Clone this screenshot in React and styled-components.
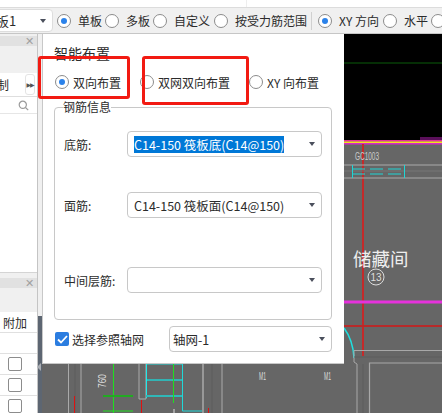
import React from 'react';
import styled, { createGlobalStyle } from 'styled-components';

const GlobalStyle = createGlobalStyle`
  html, body {
    margin: 0;
    padding: 0;
    overflow: hidden;
    background: #fff;
  }

  * {
    box-sizing: border-box;
  }
`;

const Page = styled.div`
  width: 442px;
  height: 413px;
  overflow: hidden;
  display: flex;
  flex-direction: column;
  font-family: 'Noto Sans CJK SC', 'Open Sans', sans-serif;
  font-size: 12px;
  color: #2b2b2b;
`;

const TopStrip = styled.div`
  height: 8px;
  flex: none;
  background: #fff;
  border-bottom: 1px solid #dcdcdc;
  padding-left: 246px;
`;

const StripDivider = styled.div`
  width: 1px;
  height: 7px;
  background: #eee;
`;

const Toolbar = styled.div`
  height: 26px;
  flex: none;
  display: flex;
  align-items: center;
  background: #f0f0f0;
  border-bottom: 1px solid #c6c6c6;
  white-space: nowrap;
`;

const BoardCombo = styled.div`
  flex: none;
  width: 63px;
  height: 23px;
  margin-left: -10px;
  margin-right: 4px;
  padding: 0 0 0 5px;
  display: flex;
  align-items: center;
  justify-content: space-between;
  background: #fff;
  border: 1px solid #ddd;
  border-radius: 4px;
  font-size: 13px;
`;

const Caret = styled.span`
  flex: none;
  width: 0;
  height: 0;
  margin-right: ${(p) => p.$right || 6}px;
  border-left: 3px solid transparent;
  border-right: 3px solid transparent;
  border-top: 4px solid #4a4f5c;
`;

const Radio = styled.span`
  flex: none;
  position: relative;
  display: block;
  width: 14px;
  height: 14px;
  border: 1px solid #8c8c8c;
  border-radius: 50%;
  background: #fff;

  &::after {
    content: '';
    display: ${(p) => (p.$checked ? 'block' : 'none')};
    position: absolute;
    left: 3px;
    top: 3px;
    width: 6px;
    height: 6px;
    border-radius: 50%;
    background: #2b82ea;
  }
`;

const ToolOption = styled.label`
  flex: none;
  display: flex;
  align-items: center;
  gap: 7px;
  margin-right: ${(p) => p.$gap ?? 3}px;
  font-size: 12px;
  line-height: 16px;
`;

const ToolDivider = styled.span`
  flex: none;
  width: 1px;
  height: 18px;
  margin: 0 6px 0 1px;
  background: #d0d0d0;
`;

const Main = styled.div`
  flex: 1;
  min-height: 0;
  display: flex;
`;

const Sidebar = styled.div`
  flex: none;
  width: 42px;
  display: flex;
`;

const Panels = styled.div`
  width: 38px;
  display: flex;
  flex-direction: column;
  background: #f0f0f0;
  border-right: 1px solid #c4c4c4;
`;

const Splitter = styled.div`
  width: 4px;
  display: flex;
  flex-direction: column;
  justify-content: flex-end;
  background: #f0f0f0;
`;

const SplitterBar = styled.div`
  height: 97px;
  padding-top: 47px;
  background: #5d6672;
`;

const SplitterArrow = styled.div`
  width: 0;
  height: 0;
  margin-left: -1px;
  border-top: 4px solid transparent;
  border-bottom: 4px solid transparent;
  border-right: 4px solid #a9adb3;
`;

const PanelTitle = styled.div`
  height: 10px;
  margin-top: ${(p) => p.$top}px;
  flex: none;
  display: flex;
  align-items: center;
  justify-content: flex-end;
  padding-right: 3px;
  background: #e1e1e1;
  color: #a0a0a0;
  font-family: 'Liberation Sans', sans-serif;
  font-size: 11px;
  line-height: 10px;
`;

const PanelGap = styled.div`
  height: ${(p) => p.$height}px;
  flex: none;
`;

const TabRow = styled.div`
  height: 24px;
  flex: none;
  display: flex;
  align-items: center;
  justify-content: space-between;
  padding: 0 2px 0 0;
  background: #fff;
  border-bottom: 1px solid #dedede;
  overflow: hidden;
`;

const TabText = styled.span`
  flex: none;
  margin-left: -3px;
  font-size: 12px;
`;

const MoreButton = styled.span`
  flex: none;
  width: 10px;
  height: 21px;
  display: flex;
  align-items: center;
  justify-content: center;
  border: 1px solid #e4e4e4;
  border-radius: 3px;
  color: #555;
  font-family: 'DejaVu Sans', sans-serif;
  font-size: 6px;
  letter-spacing: -1px;
`;

const SearchRow = styled.div`
  height: 17px;
  flex: none;
  display: flex;
  align-items: center;
  justify-content: flex-end;
  padding-right: 8px;
  background: #fff;
  border-bottom: 1px solid #e6e6e6;
`;

const ListBody = styled.div`
  height: 159px;
  flex: none;
  background: #fff;
  border-bottom: 1px solid #d4d4d4;
`;

const TableHead = styled.div`
  height: 21px;
  flex: none;
  display: flex;
  align-items: center;
  padding-left: 3px;
  background: #fff;
  border-bottom: 1px solid #e0e0e0;
  font-size: 12px;
  white-space: nowrap;
  overflow: hidden;
`;

const TableRow = styled.div`
  height: 21px;
  flex: none;
  display: flex;
  align-items: center;
  padding-left: 8px;
  background: #fff;
  border-bottom: 1px solid #e0e0e0;
`;

const CellCheck = styled.span`
  width: 14px;
  height: 14px;
  border: 1px solid #8c8c8c;
  border-radius: 2px;
  background: #fff;
`;

const Canvas = styled.div`
  flex: 1;
  position: relative;
  background: #666;
`;

const Drawing = styled.svg`
  display: block;
`;

const Dialog = styled.div`
  position: absolute;
  left: 0;
  top: 0;
  width: 302px;
  height: 330px;
  padding: 10px 12px 0 11px;
  display: flex;
  flex-direction: column;
  background: #fff;
  border-left: 1px solid #c8c8c8;
  border-bottom: 1px solid #c8c8c8;
`;

const DialogTitle = styled.div`
  height: 19px;
  font-size: 14px;
  line-height: 19px;
`;

const ModeRow = styled.div`
  height: 37px;
  padding: 10px 0 0 1px;
  display: flex;
  align-items: flex-start;
`;

const ModeOption = styled.label`
  flex: none;
  width: ${(p) => p.$width}px;
  height: 18px;
  display: flex;
  align-items: center;
  gap: 4px;
  font-size: 12px;
  white-space: nowrap;
`;

const RebarGroup = styled.fieldset`
  margin: 0;
  height: 220px;
  padding: 0 9px 0 9px;
  border: 1px solid #c8c8c8;
  border-radius: 4px;
  min-width: 0;
`;

const GroupLegend = styled.legend`
  padding: 0;
  margin-left: -1px;
  font-size: 12px;
  line-height: 14px;
`;

const FieldRow = styled.div`
  display: flex;
  align-items: center;
  margin-top: ${(p) => p.$top}px;
  height: 26px;
`;

const FieldLabel = styled.span`
  flex: none;
  width: 63px;
  font-size: 12px;
  white-space: nowrap;
`;

const Select = styled.div`
  flex: 1;
  height: 26px;
  display: flex;
  align-items: center;
  justify-content: space-between;
  padding-left: ${(p) => p.$pad || 6}px;
  background: #fff;
  border: 1px solid #c8c8c8;
  border-radius: 4px;
  font-size: 12.5px;
  white-space: nowrap;
`;

const SelectedText = styled.span`
  height: 17px;
  line-height: 17px;
  background: #0078d7;
  color: #fff;
`;

const Footer = styled.div`
  display: flex;
  align-items: center;
  margin-top: 6px;
  height: 26px;
`;

const Checkbox = styled.span`
  flex: none;
  width: 14px;
  height: 14px;
  margin: 0 3px 0 1px;
  display: flex;
  align-items: center;
  justify-content: center;
  border-radius: 2px;
  background: #2b7de0;
`;

const FooterLabel = styled.span`
  flex: none;
  width: 97px;
  font-size: 12px;
  white-space: nowrap;
`;

const Callout = styled.div`
  position: absolute;
  left: ${(p) => p.$left}px;
  top: 22px;
  width: ${(p) => p.$width}px;
  height: ${(p) => p.$height}px;
  border: 3px solid #f21a12;
  border-radius: 3px;
  pointer-events: none;
`;

function CanvasDrawing() {
  return (
    <Drawing width="400" height="379" viewBox="42 34 400 379">
      <rect x="42" y="34" width="400" height="379" fill="#666" />
      <rect x="343" y="34" width="99" height="106" fill="#000" />
      <line x1="343" y1="63" x2="442" y2="63" stroke="#0b5c0b" />
      <rect x="420" y="137" width="22" height="3" fill="#5a0f5a" />
      <rect x="343" y="140" width="99" height="1.5" fill="#e8309a" />
      <rect x="343" y="141.5" width="99" height="1.5" fill="#f5e020" />
      <rect x="343" y="143" width="99" height="1.5" fill="#d828c8" />

      <line x1="363" y1="144" x2="363" y2="356" stroke="#c42a2a" strokeWidth="2" />
      <line x1="343" y1="165" x2="442" y2="165" stroke="#aaa" />
      <line x1="343" y1="171" x2="442" y2="171" stroke="#777" />
      <line x1="343" y1="178" x2="442" y2="178" stroke="#aaa" />
      <g stroke="#1fd6d6">
        <line x1="352.5" y1="165" x2="352.5" y2="178" />
        <line x1="404.5" y1="165" x2="404.5" y2="178" />
        <path d="M352 169h52" strokeDasharray="13 5" />
        <path d="M352 174h52" strokeDasharray="13 5" />
      </g>
      <text x="355" y="160" fill="#ccc" fontSize="10" textLength="24" lengthAdjust="spacingAndGlyphs" fontFamily="'Liberation Sans', sans-serif">GC1003</text>
      <text x="353" y="266" fill="#eee" fontSize="18.5" fontFamily="'Noto Sans CJK SC', sans-serif">储藏间</text>
      <circle cx="376" cy="277" r="8" fill="none" stroke="#ddd" />
      <text x="376" y="281" fill="#ddd" fontSize="10" textAnchor="middle" fontFamily="'Liberation Sans', sans-serif">13</text>
      <line x1="343" y1="302" x2="442" y2="302" stroke="#e632dc" strokeWidth="3" />
      <line x1="343" y1="326" x2="442" y2="326" stroke="#b82a2a" strokeWidth="2" />

      <path d="M344 328Q353 340 354 358" fill="none" stroke="#1fe0e0" strokeWidth="1.5" />
      <path d="M442 350.5H354V362L357 364V413" fill="none" stroke="#a8a8a8" />
      <path d="M442 363H369.5V413" fill="none" stroke="#a8a8a8" strokeWidth="1.2" />
      <line x1="354" y1="357" x2="442" y2="357" stroke="#5c5c5c" />
      <line x1="363" y1="364" x2="363" y2="413" stroke="#5c5c5c" />

      <g fill="none">
        <line x1="68.5" y1="363" x2="68.5" y2="413" stroke="#aaa" />
        <line x1="81" y1="363" x2="81" y2="413" stroke="#aaa" />
        <line x1="75" y1="363" x2="75" y2="413" stroke="#5c5c5c" />
        <line x1="74.5" y1="396" x2="74.5" y2="413" stroke="#e01010" />
        <path d="M139 363V399H146V363" stroke="#aaa" />
        <line x1="141.5" y1="400" x2="141.5" y2="413" stroke="#e01010" />
        <line x1="113.5" y1="363" x2="113.5" y2="413" stroke="#1ee01e" />
        <line x1="103" y1="396" x2="133" y2="396" stroke="#22aa22" strokeWidth="2" />
        <line x1="103" y1="411" x2="133" y2="411" stroke="#1ee01e" />
        <path d="M146.5 364H182.5V411H202" stroke="#20d8d8" />
        <line x1="146.5" y1="363" x2="146.5" y2="398" stroke="#20e8e8" />
        <line x1="146" y1="380" x2="182" y2="380" stroke="#00ffff" />
        <line x1="146" y1="396" x2="182" y2="396" stroke="#30b8b8" strokeWidth="2" />
        <line x1="173.5" y1="363" x2="173.5" y2="403" stroke="#1ee01e" />
        <line x1="174" y1="409" x2="174" y2="413" stroke="#ddd" />
        <line x1="203" y1="363" x2="203" y2="413" stroke="#aaa" strokeWidth="1.5" />
        <line x1="222" y1="363" x2="222" y2="413" stroke="#aaa" />
        <line x1="212" y1="363" x2="212" y2="413" stroke="#5c5c5c" />
        <line x1="208.5" y1="408" x2="208.5" y2="413" stroke="#e01010" />
      </g>
      <text transform="translate(106 388) rotate(-90)" fill="#ddd" fontSize="11" textLength="14" lengthAdjust="spacingAndGlyphs" fontFamily="'Liberation Sans', sans-serif">760</text>
      <text x="259" y="380" fill="#ddd" fontSize="11" textLength="7" lengthAdjust="spacingAndGlyphs" fontFamily="'Liberation Sans', sans-serif">M1</text>
      <text x="324" y="380" fill="#ddd" fontSize="11" textLength="7" lengthAdjust="spacingAndGlyphs" fontFamily="'Liberation Sans', sans-serif">M1</text>
    </Drawing>
  );
}

export default function App() {
  return (
    <Page>
      <GlobalStyle />
      <TopStrip>
        <StripDivider />
      </TopStrip>
      <Toolbar>
        <BoardCombo>
          板1
          <Caret />
        </BoardCombo>
        <ToolOption>
          <Radio $checked />
          单板
        </ToolOption>
        <ToolOption>
          <Radio />
          多板
        </ToolOption>
        <ToolOption $gap={4}>
          <Radio />
          自定义
        </ToolOption>
        <ToolOption $gap={3}>
          <Radio />
          按受力筋范围
        </ToolOption>
        <ToolDivider />
        <ToolOption $gap={4}>
          <Radio $checked />
          XY 方向
        </ToolOption>
        <ToolOption>
          <Radio />
          水平
        </ToolOption>
        <Radio />
      </Toolbar>
      <Main>
        <Sidebar>
          <Panels>
            <PanelTitle $top={2}>✕</PanelTitle>
            <PanelGap $height={27} />
            <TabRow>
              <TabText>制</TabText>
              <MoreButton>▶▶</MoreButton>
            </TabRow>
            <SearchRow>
              <svg width="11" height="11" viewBox="0 0 11 11" fill="none" stroke="#9a9a9a" strokeWidth="1.2">
                <circle cx="4.8" cy="4.8" r="3.6" />
                <line x1="7.5" y1="7.5" x2="10.2" y2="10.2" />
              </svg>
            </SearchRow>
            <ListBody />
            <PanelTitle $top={5}>✕</PanelTitle>
            <PanelGap $height={24} />
            <TableHead>附加</TableHead>
            <TableRow />
            <TableRow>
              <CellCheck />
            </TableRow>
            <TableRow>
              <CellCheck />
            </TableRow>
            <TableRow>
              <CellCheck />
            </TableRow>
          </Panels>
          <Splitter>
            <SplitterBar>
              <SplitterArrow />
            </SplitterBar>
          </Splitter>
        </Sidebar>
        <Canvas>
          <CanvasDrawing />
          <Dialog>
            <DialogTitle>智能布置</DialogTitle>
            <ModeRow>
              <ModeOption $width={85}>
                <Radio $checked />
                双向布置
              </ModeOption>
              <ModeOption $width={109}>
                <Radio />
                双网双向布置
              </ModeOption>
              <ModeOption $width={80}>
                <Radio />
                XY 向布置
              </ModeOption>
            </ModeRow>
            <RebarGroup>
              <GroupLegend>钢筋信息</GroupLegend>
              <FieldRow $top={17}>
                <FieldLabel>底筋:</FieldLabel>
                <Select>
                  <SelectedText>C14-150 筏板底(C14@150)</SelectedText>
                  <Caret />
                </Select>
              </FieldRow>
              <FieldRow $top={35}>
                <FieldLabel>面筋:</FieldLabel>
                <Select>
                  C14-150 筏板面(C14@150)
                  <Caret />
                </Select>
              </FieldRow>
              <FieldRow $top={49}>
                <FieldLabel>中间层筋:</FieldLabel>
                <Select>
                  <span />
                  <Caret />
                </Select>
              </FieldRow>
            </RebarGroup>
            <Footer>
              <Checkbox>
                <svg width="11" height="9" viewBox="0 0 11 9" fill="none" stroke="#fff" strokeWidth="1.8">
                  <path d="M1 4.5L4 7.5L10 1" />
                </svg>
              </Checkbox>
              <FooterLabel>选择参照轴网</FooterLabel>
              <Select $pad={3}>
                轴网-1
                <Caret />
              </Select>
            </Footer>
            <Callout $left={-5} $width={92} $height={43} />
            <Callout $left={99} $width={107} $height={49} />
          </Dialog>
        </Canvas>
      </Main>
    </Page>
  );
}
